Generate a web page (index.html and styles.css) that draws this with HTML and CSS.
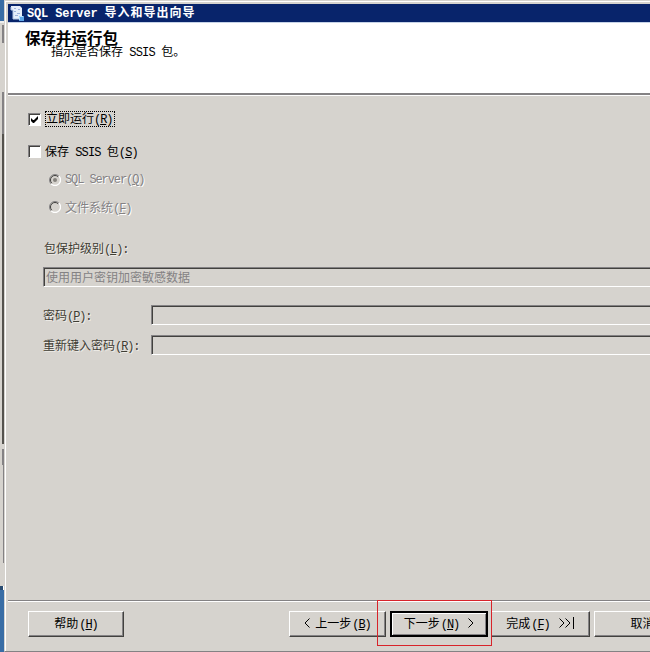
FILE: index.html
```html
<!DOCTYPE html>
<html lang="zh-CN">
<head>
<meta charset="utf-8">
<title>SQL Server 导入和导出向导</title>
<link rel="stylesheet" href="styles.css">
</head>
<body>
<div class="desktop">
  <div class="behind">
    <i class="b-blue"></i><i class="b-white"></i><i class="b-gap"></i><i class="b-bar1"></i><i class="b-space"></i><i class="b-bar2"></i><i class="b-dark"></i><i class="b-gap2"></i><i class="b-bar3"></i><i class="b-light"></i><i class="b-foot"></i><i class="b-mark"></i><i class="b-sea"></i>
  </div>
  <div class="window">
    <div class="titlebar">
      <svg class="icon" width="15" height="17" viewBox="0 0 15 17"><path d="M1 1h9l2 2v11H3V5H1z" fill="#e6edfa"/><path d="M1 2v3h2M3 5v9h7" fill="none" stroke="#b5c7e6"/><path d="M4 3.5h2M8 4.5h2M4 6.5h2M7 8.5h3M5 10.5h3" stroke="#9db2dc"/><path d="M9 11h5v5H9z" fill="#5da5e8"/><path d="M9.5 15V11.5H13" fill="none" stroke="#b9e0ff"/></svg>
      <span class="title"><span class="lt">SQL Server </span>导入和导出向导</span>
    </div>
    <div class="header">
      <h1>保存并运行包</h1>
      <p>指示是否保存<span class="l"> SSIS </span>包。</p>
    </div>
    <div class="body">
      <div class="row run"><span class="check"><svg width="7" height="7" viewBox="0 0 7 7"><path d="M0 2v3l2 2h1l4-4V0L3 4H2z"/></svg></span><span class="focus">立即运行<span class="l">(<u>R</u>)</span></span></div>
      <div class="row save"><span class="check"></span><span class="lab">保存<span class="l"> SSIS </span>包<span class="l">(<u>S</u>)</span></span></div>
      <div class="row radio sql"><svg width="12" height="12" viewBox="0 0 12 12"><path d="M2.1 9.9A5.5 5.5 0 0 1 9.9 2.1" fill="none" stroke="#848284"/><path d="M2.8 9.2A4.5 4.5 0 0 1 9.2 2.8" fill="none" stroke="#42413e"/><path d="M9.9 2.1A5.5 5.5 0 0 1 2.1 9.9" fill="none" stroke="#fff" stroke-width="1.3"/><circle cx="6" cy="6" r="2" fill="#85827d"/></svg><span class="l">SQL Server(<u>Q</u>)</span></div>
      <div class="row radio file"><svg width="12" height="12" viewBox="0 0 12 12"><path d="M2.1 9.9A5.5 5.5 0 0 1 9.9 2.1" fill="none" stroke="#848284"/><path d="M2.8 9.2A4.5 4.5 0 0 1 9.2 2.8" fill="none" stroke="#42413e"/><path d="M9.9 2.1A5.5 5.5 0 0 1 2.1 9.9" fill="none" stroke="#fff" stroke-width="1.3"/></svg><span>文件系统<span class="l">(<u>F</u>)</span></span></div>
      <div class="row level"><span>包保护级别<span class="l">(<u>L</u>):</span></span></div>
      <div class="field combo">使用用户密钥加密敏感数据</div>
      <div class="pair first"><label>密码<span class="l">(<u>P</u>):</span></label><div class="field"></div></div>
      <div class="pair"><label>重新键入密码<span class="l">(<u>R</u>):</span></label><div class="field"></div></div>
    </div>
    <div class="footer">
      <div class="btn help"><span>帮助<span class="l">(<u>H</u>)</span></span></div>
      <div class="btn prev"><svg class="arrow" width="6" height="10" viewBox="0 0 6 10"><path d="M5.5.5L1 5l4.5 4.5"/></svg><span>上一步<span class="l">(<u>B</u>)</span></span></div>
      <div class="btn next"><span>下一步<span class="l">(<u>N</u>)</span></span><svg class="arrow" width="6" height="10" viewBox="0 0 6 10"><path d="M.5.5L5 5 .5 9.5"/></svg></div>
      <div class="btn finish"><span>完成<span class="l">(<u>F</u>)</span></span><svg class="arrow" width="16" height="12" viewBox="0 0 16 12"><path d="M.5 1.5L5 6 .5 10.5M6.5 1.5L11 6l-4.5 4.5M14.5 0v12"/></svg></div>
      <div class="btn cancel">取消</div>
    </div>
  </div>
  <div class="highlight"></div>
</div>
</body>
</html>
```
FILE: styles.css
```css
* { box-sizing: border-box; }
body { margin: 0; background: #d6d3ce; }
.desktop {
  position: relative;
  display: flex;
  width: 650px;
  height: 652px;
  overflow: hidden;
  background: #d6d3ce;
  color: #000;
  font: 12px/16px "Noto Sans CJK SC", sans-serif;
}
.l { font: 12px/12px "Liberation Mono", monospace; letter-spacing: -1.1px; white-space: pre; }
u { text-decoration: underline; text-underline-offset: 1px; text-decoration-thickness: 1px; }

.behind { display: flex; flex-direction: column; width: 4px; flex: none; }
.behind i { display: block; flex: none; }
.b-blue { height: 21px; background: #396da5; }
.b-white { height: 2px; background: #eee; }
.b-gap { height: 2px; }
.b-bar1 { height: 18px; border-right: 2px solid #848284; }
.b-space { height: 49px; }
.b-bar2 { height: 42px; border-right: 2px solid #848284; }
.b-dark { height: 310px; border-right: 2px solid #55534e; }
.b-gap2 { height: 5px; }
.b-bar3 { height: 16px; border-right: 2px solid #848284; }
.b-light { height: 98px; border-right: 1px solid #848284; }
.b-foot { height: 23px; }
.b-mark { height: 4px; background: #294b70; border-right: 1px solid #fff; }
.b-sea { height: 62px; background: #396da5; }

.window {
  display: flex;
  flex-direction: column;
  width: 646px;
  height: 652px;
  padding: 2px 0 0 2px;
  border-left: 1px solid #d6d3ce;
  border-top: 1px solid #d6d3ce;
  border-bottom: 1px solid #848284;
  background: #d6d3ce;
  box-shadow: inset 1px 1px #fff;
}
.titlebar {
  display: flex;
  align-items: center;
  height: 19px;
  margin: 1px 0 0 1px;
  padding-left: 2px;
  background: #08246b;
  border-bottom: 1px solid #c6d3e7;
  color: #fff;
}
.icon { margin-right: 2px; }
.title { font-weight: 700; letter-spacing: 1px; white-space: pre; line-height: 18px; }
.lt { font: 700 12px/18px "Liberation Mono", monospace; letter-spacing: -.15px; }
.header { height: 72px; margin-left: 1px; padding: 4px 0 0 17px; background: #fff; border-bottom: 2px solid #848284; }
h1 { margin: 0; font-size: 15.5px; line-height: 20px; font-weight: 700; }
.header p { margin: -4px 0 0 26px; line-height: 16px; white-space: nowrap; }
.header .l { letter-spacing: -.85px; }

.body { flex: none; height: 505px; margin-left: 1px; padding: 14px 0 0 20px; border-top: 1px solid #fff; }
.row { display: flex; align-items: center; height: 18px; }
.check {
  display: flex;
  align-items: center;
  justify-content: center;
  width: 13px;
  height: 13px;
  margin-right: 4px;
  border: 1px solid;
  border-color: #848284 #fff #fff #848284;
  box-shadow: inset 1px 1px #42413e;
  background: #fff;
}
.focus { height: 16px; width: 70px; border: 1px dotted #000; line-height: 11px; white-space: nowrap; }
.lab { white-space: pre; }
.lab .l { letter-spacing: -.9px; }
.save { margin-top: 14px; }
.radio { gap: 4px; margin-left: 21px; color: #848284; text-shadow: 1px 1px #fff; }
.sql { margin-top: 11px; }
.file { margin-top: 9px; }
.level { margin: 23px 0 0 16px; color: #3f3d34; text-shadow: 1px 1px #efede8; }
.field {
  height: 20px;
  border: 1px solid;
  border-right: 0;
  border-color: #848284 #fff #fff #848284;
  box-shadow: inset 1px 1px #42413e;
}
.combo { margin: 10px 0 0 15px; padding-left: 2px; line-height: 17px; color: #848284; }
.pair { display: flex; margin: 10px 0 0 15px; }
.pair.first { margin-top: 18px; }
.pair label { width: 108px; line-height: 20px; color: #3f3d34; text-shadow: 1px 1px #efede8; }
.pair .field { flex: 1; }

.footer { display: flex; flex: 1; margin-left: 1px; padding: 10px 0 0 20px; border-top: 1px solid #848284; box-shadow: inset 0 1px #fff; }
.btn {
  display: flex;
  align-items: center;
  justify-content: center;
  flex: none;
  width: 97px;
  height: 26px;
  padding-bottom: 2px;
  border: 1px solid;
  border-color: #fff #42413e #42413e #fff;
  box-shadow: inset -1px -1px #848284;
  line-height: 16px;
}
.btn .l { margin-left: 1px; }
.arrow { fill: none; stroke: #000; }
.help { width: 96px; }
.prev { margin-left: 165px; }
.prev .arrow { margin-right: 5px; }
.next { width: 98px; margin-left: 4px; border: 2px solid #000; box-shadow: inset 1px 1px #fff, inset -1px -1px #848284; }
.next .arrow { margin-left: 9px; }
.finish { width: 99px; margin-left: 3px; }
.finish .arrow { margin-left: 9px; }
.cancel { margin-left: 4px; }
.highlight { position: absolute; left: 377px; top: 600px; width: 115px; height: 46px; border: 1px solid #d8232a; }
```
